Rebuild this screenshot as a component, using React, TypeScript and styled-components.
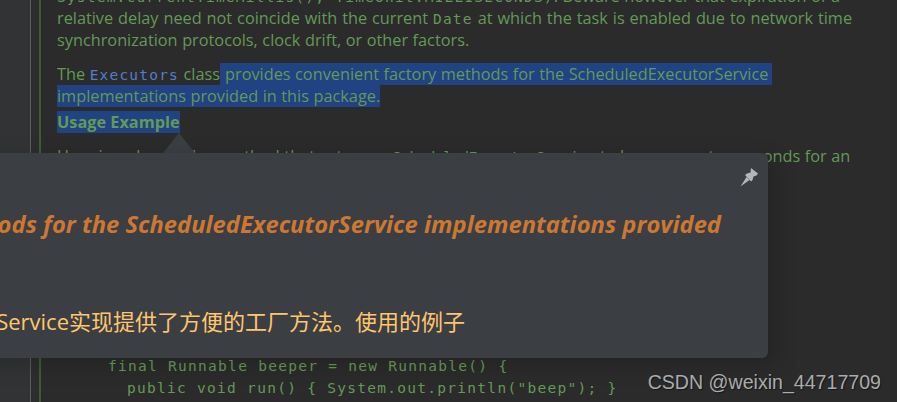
import React from "react";
import styled, { createGlobalStyle } from "styled-components";

const Global = createGlobalStyle`
  html, body { margin: 0; padding: 0; background: #2b2b2b; }
  body { width: 897px; height: 402px; overflow: hidden; }
`;

const Editor = styled.div`
  position: relative;
  display: flex;
  width: 897px;
  height: 402px;
  overflow: hidden;
  background: #2b2b2b;
  font-family: "Open Sans", "Noto Sans", "Noto Sans CJK SC", sans-serif;
`;

const Gutter = styled.div`
  flex: none;
  width: 30px;
  background: #313335;
  border-right: 1px solid #5a5c5e;
`;

const Fold = styled.div`
  flex: none;
  width: 8px;
  background: #2d2d2d;
  border-right: 2px solid #3f5a39;
`;

const Doc = styled.div`
  flex: 1;
  min-width: 0;
  display: flex;
  flex-direction: column;
  padding: 0 0 0 16px;
  margin-top: -15px;
  color: #629a56;
  font-size: 16.3px;
  word-spacing: 0.3px;
`;

const Line = styled.div<{ $after?: number; $spread?: number }>`
  height: 22px;
  line-height: 22px;
  white-space: nowrap;
  margin-bottom: ${(p) => p.$after ?? 0}px;
  word-spacing: ${(p) => p.$spread ?? 0.3}px;
`;

const Mono = styled.span<{ $spacing?: number }>`
  font-family: "DejaVu Sans Mono", monospace;
  font-size: 14.5px;
  letter-spacing: ${(p) => p.$spacing ?? 1.2}px;
`;

const Link = styled(Mono)`
  color: #4f7fd0;
`;

const Selected = styled.span<{ $lead?: number; $trail?: number }>`
  background: #214283;
  display: inline-block;
  height: 22px;
  padding-left: ${(p) => p.$lead ?? 0}px;
  padding-right: ${(p) => p.$trail ?? 0}px;
`;

const Heading = styled(Selected)`
  font-weight: 700;
  word-spacing: 0;
`;

const Code = styled.div<{ $indent: number }>`
  height: 22px;
  line-height: 22px;
  white-space: pre;
  padding-left: ${(p) => p.$indent}px;
  font-family: "DejaVu Sans Mono", monospace;
  font-size: 14.5px;
  letter-spacing: 1.28px;
  word-spacing: 0;
  color: #629a56;
`;

const Filler = styled.div`
  height: 188px;
`;

const Popup = styled.div`
  position: absolute;
  right: 129px;
  top: 153px;
  width: 1100px;
  height: 205px;
  box-sizing: border-box;
  padding: 57px 47px 0 0;
  background: #3b3e42;
  border-radius: 6px;
  box-shadow: 8px 6px 22px rgba(0, 0, 0, 0.18);
  display: flex;
  flex-direction: column;
  align-items: flex-end;
`;

const Arrow = styled.div`
  position: absolute;
  left: 163px;
  top: 133px;
  width: 32px;
  height: 20px;
  background: #3b3e42;
  clip-path: polygon(50% 0, 100% 100%, 0 100%);
`;

const Title = styled.div`
  height: 28px;
  line-height: 28px;
  font-size: 23.75px;
  font-weight: 700;
  font-style: italic;
  color: #cc7832;
  white-space: nowrap;
`;

const Translation = styled.div`
  align-self: flex-end;
  margin-top: 69px;
  margin-right: 256px;
  height: 28px;
  line-height: 28px;
  font-size: 22px;
  color: #ffc66d;
  white-space: nowrap;
`;

const PinButton = styled.div`
  position: absolute;
  right: 9px;
  top: 14px;
  width: 20px;
  height: 20px;
  color: #b4b6b8;
`;

const Watermark = styled.div`
  position: absolute;
  right: 16px;
  top: 371px;
  font-family: "Liberation Sans", Arial, sans-serif;
  font-size: 19.6px;
  line-height: 22px;
  color: #a9abad;
  text-shadow: 1px 1px 1px rgba(0, 0, 0, 0.5);
  white-space: nowrap;
`;

export default function App() {
  return (
    <Editor>
      <Global />
      <Gutter />
      <Fold />
      <Doc>
        <Line><Mono>System.currentTimeMillis(), TimeUnit.MILLISECONDS)</Mono>. Beware however that expiration of a</Line>
        <Line $spread={0.7}>relative delay need not coincide with the current <Mono>Date</Mono> at which the task is enabled due to network time</Line>
        <Line $after={12}>synchronization protocols, clock drift, or other factors.</Line>
        <Line>The <Link>Executors</Link> class<Selected $lead={5} $trail={4}>provides convenient factory methods for the ScheduledExecutorService</Selected></Line>
        <Line $after={4}><Selected>implementations provided in this package.</Selected></Line>
        <Line $after={12}><Heading>Usage Example</Heading></Line>
        <Line>Here is a class with a method that sets up a <Mono $spacing={-0.28}>ScheduledExecutorService</Mono> to beep every ten seconds for an</Line>
        <Filler />
        <Code $indent={51}>final Runnable beeper = new Runnable() {"{"}</Code>
        <Code $indent={70}>public void run() {"{"} System.out.println("beep"); {"}"}</Code>
      </Doc>
      <Arrow />
      <Popup>
        <PinButton>
          <svg viewBox="0 0 20 20" width="20" height="20" fill="currentColor">
            <path d="M12 1l7 5.5-1.5 2-3 1-1 3.5-1.5 1.5-6-6.5 2-1.5 3.5-1z" />
            <path d="M7.5 10l3 3-9 6.5z" />
          </svg>
        </PinButton>
        <Title>This class provides convenient factory methods for the ScheduledExecutorService implementations provided</Title>
        <Translation>ScheduledExecutorService实现提供了方便的工厂方法。使用的例子</Translation>
      </Popup>
      <Watermark>CSDN @weixin_44717709</Watermark>
    </Editor>
  );
}
